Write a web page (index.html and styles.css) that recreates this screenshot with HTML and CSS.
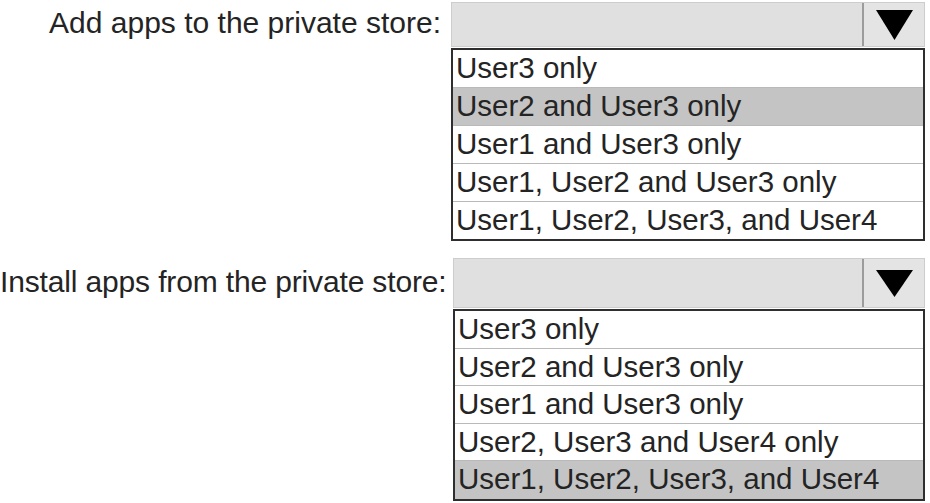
FILE: index.html
```html
<!DOCTYPE html>
<html lang="en">
<head>
<meta charset="utf-8">
<title>Private store</title>
<link rel="stylesheet" href="styles.css">
</head>
<body>
<div class="form">
  <div class="field field-add">
    <div class="label">Add apps to the private store:</div>
    <div class="select">
      <div class="value"></div>
      <div class="btn"><svg width="37" height="30" viewBox="0 0 37 30"><polygon points="0,0 37,0 18.5,30" fill="#000"/></svg></div>
    </div>
    <ul class="options">
      <li class="opt">User3 only</li>
      <li class="opt selected">User2 and User3 only</li>
      <li class="opt">User1 and User3 only</li>
      <li class="opt">User1, User2 and User3 only</li>
      <li class="opt">User1, User2, User3, and User4</li>
    </ul>
  </div>
  <div class="field field-install">
    <div class="label">Install apps from the private store:</div>
    <div class="select">
      <div class="value"></div>
      <div class="btn"><svg width="37" height="27" viewBox="0 0 37 27"><polygon points="0,0 37,0 18.5,27" fill="#000"/></svg></div>
    </div>
    <ul class="options">
      <li class="opt">User3 only</li>
      <li class="opt">User2 and User3 only</li>
      <li class="opt">User1 and User3 only</li>
      <li class="opt">User2, User3 and User4 only</li>
      <li class="opt selected">User1, User2, User3, and User4</li>
    </ul>
  </div>
</div>
</body>
</html>
```

FILE: styles.css
```css
html, body {
  margin: 0;
  padding: 0;
  background: #ffffff;
}

body {
  font-family: "Liberation Sans", Arial, sans-serif;
  color: #242424;
  width: 930px;
  height: 503px;
  overflow: hidden;
}

.form {
  padding-top: 2px;
  display: flex;
  flex-direction: column;
  gap: 17px;
}

.field {
  display: grid;
  grid-template-columns: 451px 474px;
  grid-template-rows: auto auto;
  row-gap: 1px;
}

.field-install {
  grid-template-columns: 453px 472px;
}

.label {
  grid-column: 1;
  grid-row: 1;
  align-self: center;
  text-align: right;
  padding-right: 10px;
  font-size: 30px;
  line-height: 34px;
  white-space: nowrap;
  letter-spacing: 0;
  margin-top: -4px;
}

.field-install .label {
  padding-right: 11px;
  margin-top: -2px;
  letter-spacing: -0.15px;
}

.select {
  grid-column: 2;
  grid-row: 1;
  height: 45px;
  box-sizing: border-box;
  border: 1px solid #cdcdcd;
  background: #e0e0e0;
  display: flex;
}

.field-install .select {
  height: 50px;
}

.value {
  flex: 1;
  border-right: 2px solid #9c9c9c;
}

.btn {
  width: 60px;
  display: flex;
  align-items: center;
  justify-content: center;
  background: #e4e4e4;
}

.options {
  grid-column: 2;
  grid-row: 2;
  list-style: none;
  margin: 0;
  padding: 0;
  border: 2px solid #2e2e2e;
  background: #ffffff;
}

.opt {
  height: 38px;
  box-sizing: border-box;
  padding-left: 3px;
  font-size: 29.5px;
  line-height: 36px;
  white-space: nowrap;
  border-bottom: 1px solid #b9b9b9;
}

.opt:last-child {
  border-bottom: none;
  height: 37px;
}

.field-install .opt {
  height: 37.5px;
}

.field-install .opt:last-child {
  height: 38px;
}

.opt.selected {
  background: #c4c4c4;
}
```
